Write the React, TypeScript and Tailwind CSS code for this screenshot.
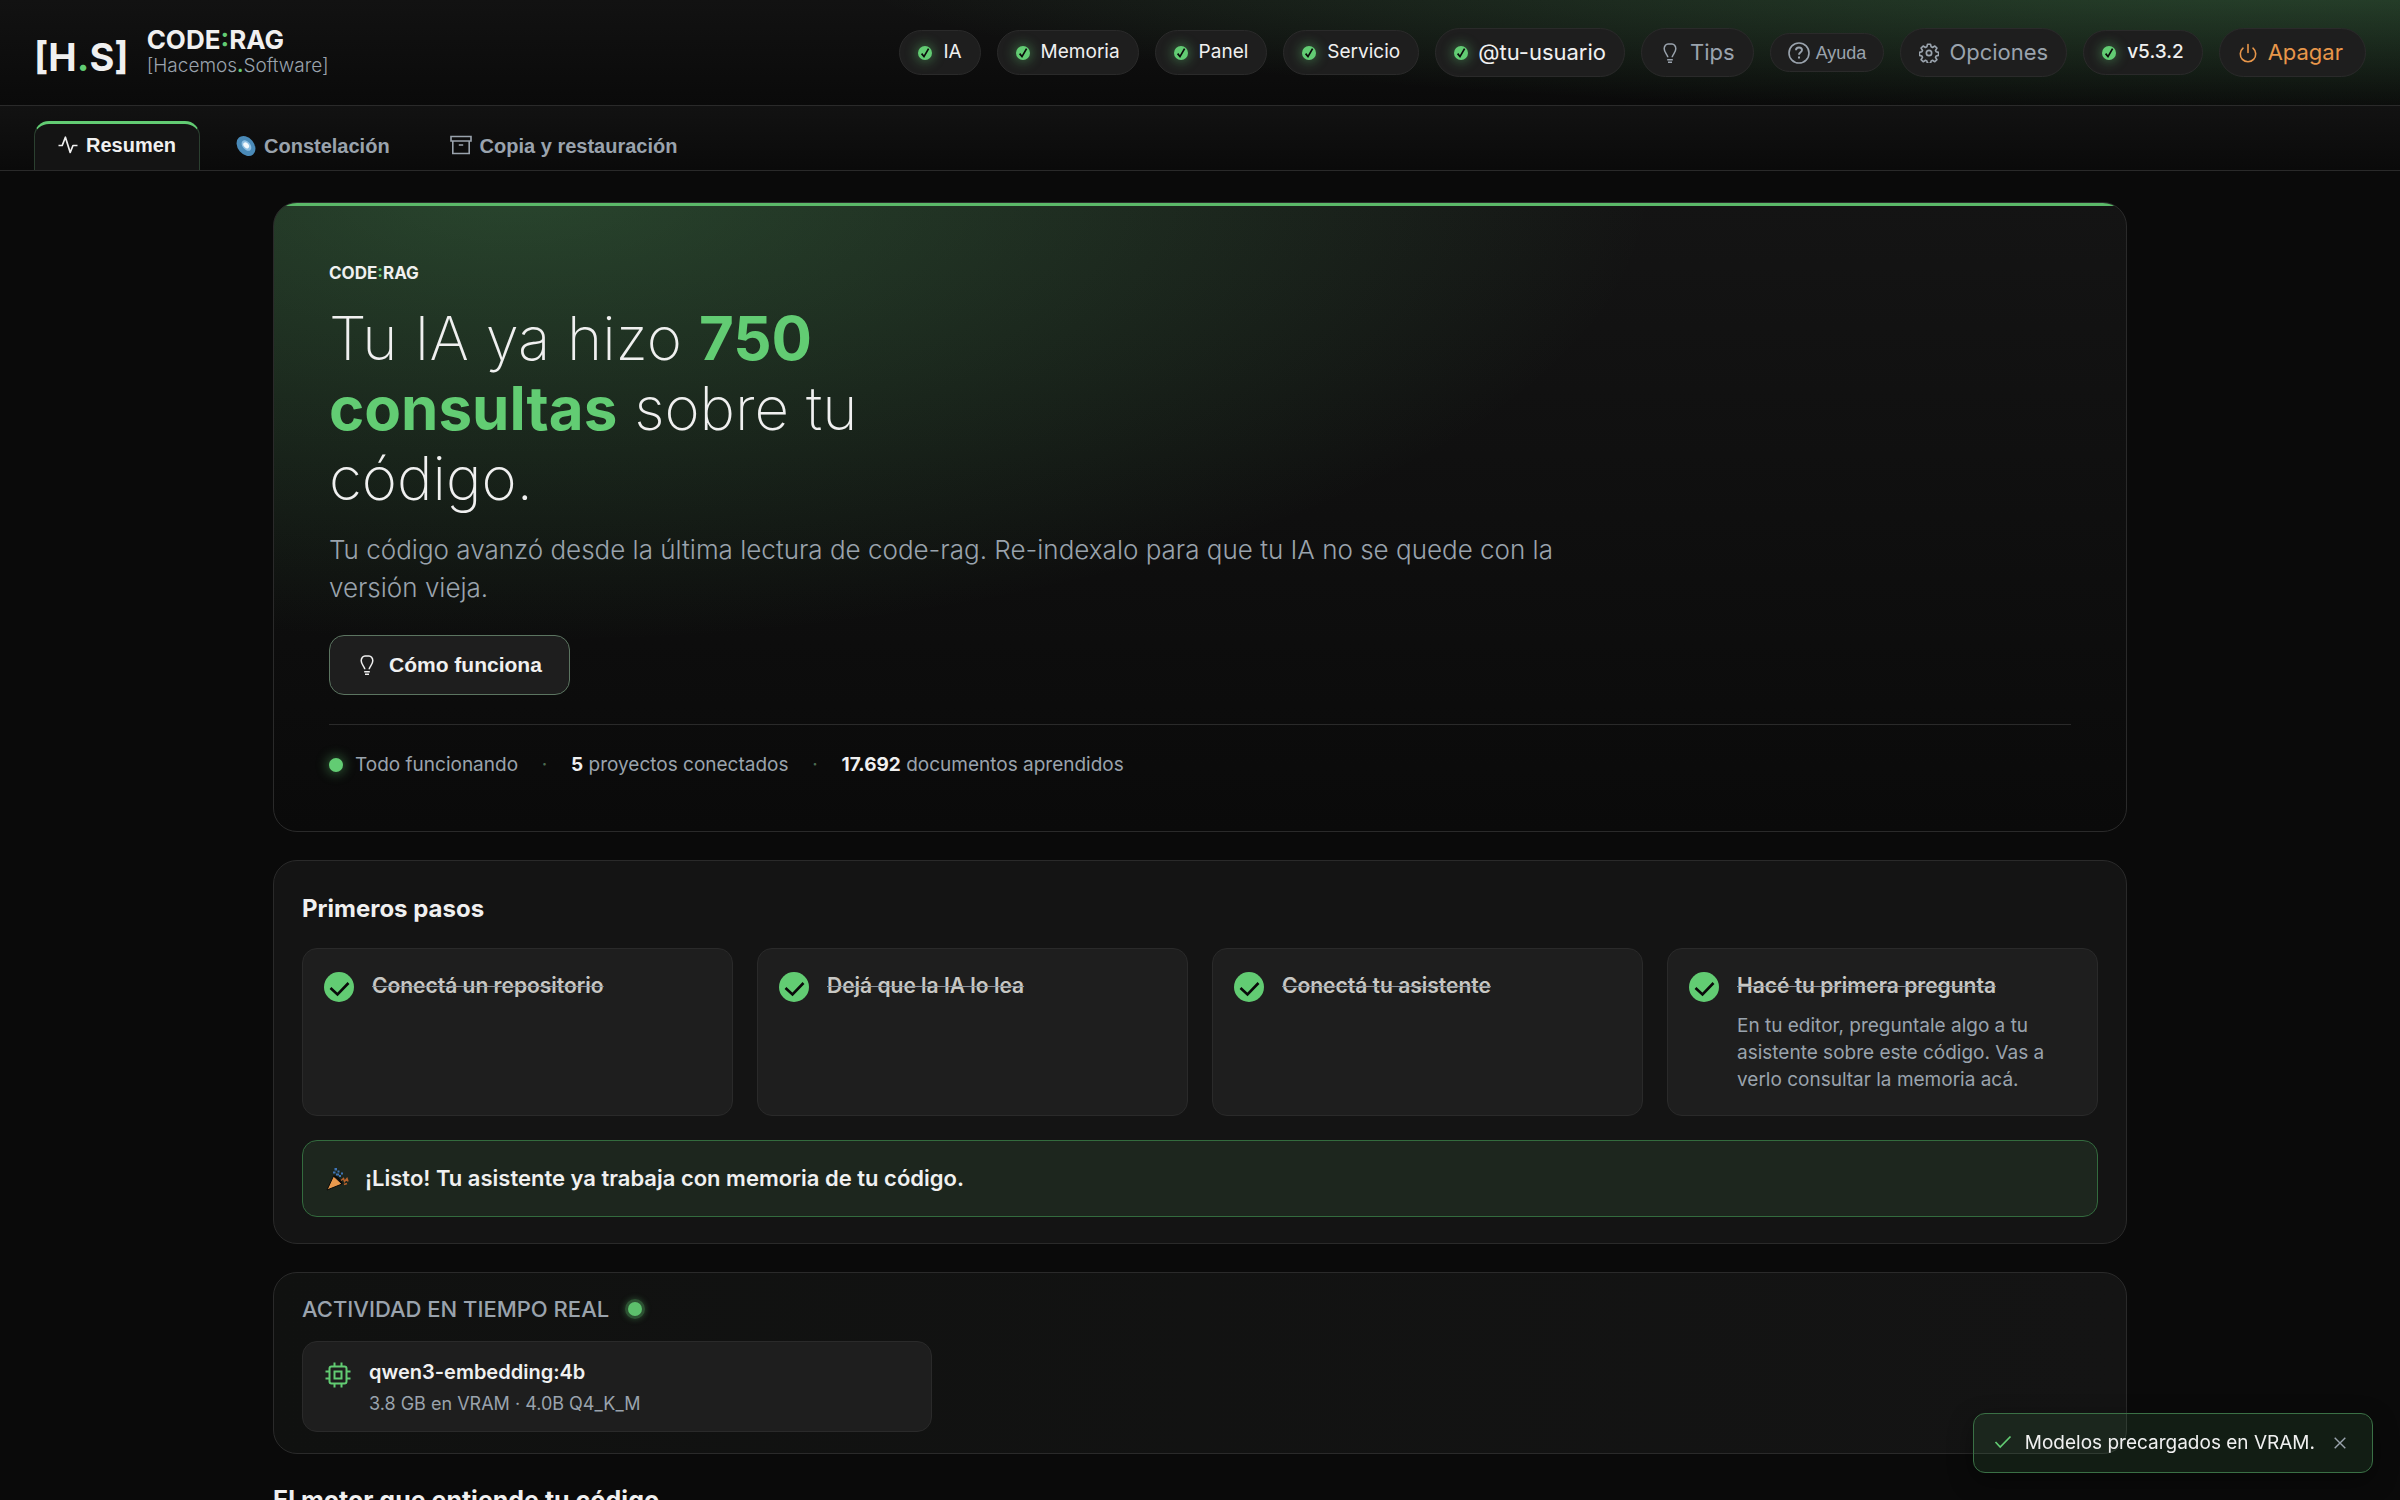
import type { ReactNode } from 'react'

type IconProps = { className?: string }

function Bulb({ className = 'size-5' }: IconProps) {
  return (
    <svg viewBox="0 0 20 20" className={className} fill="none" stroke="currentColor" strokeWidth="1.5" aria-hidden="true">
      <path d="M7.8 14.200C7.600 11.600 4.200 9.400 4.200 5.800C4.200 2.800 6.200 0.900 8 0.900H12C13.800 0.900 15.800 2.800 15.800 5.800C15.800 9.400 12.400 11.600 12.200 14.200" />
      <path d="M7.200 16.700H12.800M8 19.200H12" />
    </svg>
  )
}

function Question({ className = 'size-[22px]' }: IconProps) {
  return (
    <svg viewBox="0 0 22 22" className={className} fill="none" stroke="currentColor" strokeWidth="1.6" aria-hidden="true">
      <circle cx="11" cy="11" r="10" />
      <path d="M8 8.300C8 6.500 9.300 5.500 11 5.500C12.700 5.500 14 6.600 14 8.100C14 10.300 11 10.400 11 12.800" strokeWidth="1.900" />
      <path d="M11 14.600V16.600" strokeWidth="2" />
    </svg>
  )
}

function Gear({ className = 'size-5' }: IconProps) {
  return (
    <svg viewBox="0 0 24 24" className={className} fill="none" stroke="currentColor" strokeWidth="2" strokeLinejoin="round" aria-hidden="true">
      <circle cx="12" cy="12" r="3.200" />
      <path d="M10.200 1.500h3.600l.8 3.100 1.600.7 2.800-1.700 2.500 2.500-1.700 2.800.7 1.600 3 .8v3.500l-3 .8-.7 1.600 1.700 2.800-2.500 2.500-2.800-1.700-1.600.7-.8 3h-3.600l-.8-3-1.600-.7-2.800 1.700-2.500-2.500 1.700-2.800-.7-1.600-3-.8v-3.500l3-.8.7-1.600-1.700-2.800 2.500-2.500 2.800 1.700 1.600-.7z" />
    </svg>
  )
}

function Power({ className = 'size-5' }: IconProps) {
  return (
    <svg viewBox="0 0 20 20" className={className} fill="none" stroke="currentColor" strokeWidth="1.6" strokeLinecap="round" aria-hidden="true">
      <path d="M10 1.500V9.500M5 5.200A7.700 7.700 0 1 0 15 5.200" />
    </svg>
  )
}

function Pulse({ className = 'size-5' }: IconProps) {
  return (
    <svg viewBox="0 0 20 20" className={className} fill="none" stroke="currentColor" strokeWidth="1.700" strokeLinejoin="round" aria-hidden="true">
      <path d="M0.500 10.500H4.200L7.400 2.200L12.200 17.500L15 10.500H19.500" />
    </svg>
  )
}

function Archive({ className = 'size-[22px]' }: IconProps) {
  return (
    <svg viewBox="0 0 22 22" className={className} fill="none" stroke="currentColor" strokeWidth="1.6" aria-hidden="true">
      <path d="M1 1.500H21V6H1ZM2.800 6V18.500H19.200V6M8.800 10H13.200" />
    </svg>
  )
}

function Cpu({ className = 'size-[26px]' }: IconProps) {
  return (
    <svg viewBox="0 0 26 26" className={className} fill="none" stroke="currentColor" strokeWidth="2" aria-hidden="true">
      <rect x="4.500" y="4.500" width="17" height="17" rx="2" />
      <rect x="9.500" y="9.500" width="7" height="7" />
      <path d="M9.500 0.500V4.500M16.500 0.500V4.500M9.500 21.500V25.500M16.500 21.500V25.500M0.500 9.500H4.500M0.500 16.500H4.500M21.500 9.500H25.500M21.500 16.500H25.500" />
    </svg>
  )
}

function Galaxy() {
  return (
    <svg viewBox="0 0 20 20" className="size-5 overflow-visible" aria-hidden="true">
      <g transform="rotate(50 10 10)">
        <ellipse cx="10" cy="10" rx="11" ry="8.200" fill="#4a8ab8" />
        <ellipse cx="10" cy="9.400" rx="6" ry="3.900" fill="#8dbfe3" />
        <ellipse cx="9.600" cy="9.400" rx="3.400" ry="2.400" fill="#f2f8fc" />
      </g>
    </svg>
  )
}

function StatusDot() {
  return (
    <span className="flex size-3.5 shrink-0 items-center justify-center rounded-full bg-[#62cc73] shadow-[0_0_12px_2px_rgba(98,204,115,0.4)]">
      <svg viewBox="0 0 14 14" className="size-3.5" aria-hidden="true">
        <path d="M3.600 7.600 L6 10.600 L10.600 2.600" fill="none" stroke="#0a0a0a" strokeWidth="1.700" />
      </svg>
    </span>
  )
}

function StatusPill({ children }: { children: ReactNode }) {
  return (
    <button
      type="button"
      className="flex h-[45px] items-center gap-[11px] rounded-full border border-[#2a2a2a] bg-[#1e1e1e] px-[18px] text-[19px] text-[#f0f0f0]"
    >
      <StatusDot />
      {children}
    </button>
  )
}

function ActionPill({ icon, tone, children }: { icon: ReactNode; tone: string; children: ReactNode }) {
  return (
    <button
      type="button"
      className={`flex h-[49px] items-center gap-2.5 rounded-full border border-[#2a2a2a] bg-[#1e1e1e] px-[18px] text-[22px] ${tone}`}
    >
      {icon}
      {children}
    </button>
  )
}

function Wordmark() {
  return (
    <>
      CODE<span className="text-[#62cc73]">:</span>RAG
    </>
  )
}

function Header() {
  return (
    <header className="flex h-[106px] shrink-0 items-center justify-between border-b border-[#2a2a2a] bg-[radial-gradient(1450px_135px_at_96%_-20px,rgba(98,204,115,0.27),transparent),linear-gradient(#121212,#0a0a0a)] px-[34px]">
      <a href="#inicio" className="flex items-center gap-[18px]">
        <span className="pt-2 text-[38px] leading-10 font-bold text-[#f0f0f0]">
          [H<span className="text-[#62cc73]">.</span>S]
        </span>
        <span className="flex flex-col pb-0.5">
          <span className="text-[26px] leading-7 font-bold text-[#f0f0f0]">
            <Wordmark />
          </span>
          <span className="text-[19px] leading-6 font-light text-[#9aa3ad]">
            [Hacemos<span className="font-bold text-[#62cc73]">.</span>Software]
          </span>
        </span>
      </a>
      <div className="flex items-center gap-4">
        <StatusPill>IA</StatusPill>
        <StatusPill>Memoria</StatusPill>
        <StatusPill>Panel</StatusPill>
        <StatusPill>Servicio</StatusPill>
        <ActionPill icon={<StatusDot />} tone="text-[#f0f0f0]">
          @tu-usuario
        </ActionPill>
        <ActionPill icon={<Bulb />} tone="text-[#9aa3ad]">
          Tips
        </ActionPill>
        <button
          type="button"
          className="flex h-[39px] items-center gap-1.5 rounded-full border border-[#2a2a2a] bg-[#1e1e1e] px-[17px] font-['Liberation_Sans',sans-serif] text-lg text-[#9aa3ad]"
        >
          <Question />
          Ayuda
        </button>
        <ActionPill icon={<Gear />} tone="text-[#9aa3ad]">
          Opciones
        </ActionPill>
        <StatusPill>
          <span className="font-medium">v5.3.2</span>
        </StatusPill>
        <ActionPill icon={<Power />} tone="text-[#e8964a]">
          <span className="pr-1">Apagar</span>
        </ActionPill>
      </div>
    </header>
  )
}

function Tabs() {
  const idle = 'flex items-center gap-2 px-6 text-[#9aa3ad]'
  return (
    <nav className="flex h-[65px] shrink-0 items-stretch gap-3 border-b border-[#2a2a2a] bg-linear-to-b from-[#121212] to-[#0a0a0a] px-[34px] pt-[15px] font-['Liberation_Sans',sans-serif] text-[20px] font-bold">
      <button
        type="button"
        className="flex items-center gap-2 rounded-t-[15px] border-x border-t-[3px] border-x-[#2b4030] border-t-[#62cc73] bg-[#141414] px-[23px] pb-1 text-[#f0f0f0]"
      >
        <Pulse />
        Resumen
      </button>
      <button type="button" className={idle}>
        <Galaxy />
        Constelación
      </button>
      <button type="button" className={idle}>
        <Archive />
        Copia y restauración
      </button>
    </nav>
  )
}

function Hero() {
  return (
    <section className="relative overflow-hidden rounded-3xl border border-[#2a2a2a] bg-[radial-gradient(1140px_460px_at_13%_-20px,rgba(98,204,115,0.27),transparent),linear-gradient(#141414,#0a0a0a)] px-[55px] pt-14 pb-[52px]">
      <div className="absolute inset-x-0 top-0 h-[3px] bg-[#5bb969]" />
      <p className="text-[17px] leading-7 font-bold text-[#f0f0f0]">
        <Wordmark />
      </p>
      <h1 className="mt-4 max-w-[720px] text-[60px] leading-[70px] font-extralight text-[#f0f0f0]">
        Tu IA ya hizo <strong className="font-bold text-[#62cc73]">750 consultas</strong> sobre tu código.
      </h1>
      <p className="mt-[18px] max-w-[1270px] text-[26px] leading-[38px] font-light text-[#9aa3ad]">
        Tu código avanzó desde la última lectura de code-rag. Re-indexalo para que tu IA no se quede con la versión
        vieja.
      </p>
      <button
        type="button"
        className="mt-7 flex h-[60px] items-center gap-3 rounded-[15px] border border-[#5c7561] bg-[#1e1e1e] px-[27px] font-['Liberation_Sans',sans-serif] text-[21px] font-bold text-[#f0f0f0]"
      >
        <Bulb />
        Cómo funciona
      </button>
      <div className="mt-[29px] flex items-center border-t border-[#2a2a2a] pt-[26px] text-[19px] leading-7 text-[#9aa3ad]">
        <span className="flex items-center gap-3">
          <span className="size-3.5 rounded-full bg-[#62cc73] shadow-[0_0_12px_2px_rgba(98,204,115,0.4)]" />
          Todo funcionando
        </span>
        <span className="w-[53px] text-center text-[#4b6a51]">·</span>
        <span>
          <strong className="font-bold text-[#f0f0f0]">5</strong> proyectos conectados
        </span>
        <span className="w-[53px] text-center text-[#4b6a51]">·</span>
        <span>
          <strong className="font-bold text-[#f0f0f0]">17.692</strong> documentos aprendidos
        </span>
      </div>
    </section>
  )
}

const steps = [
  { title: 'Conectá un repositorio' },
  { title: 'Dejá que la IA lo lea' },
  { title: 'Conectá tu asistente' },
  {
    title: 'Hacé tu primera pregunta',
    text: 'En tu editor, preguntale algo a tu asistente sobre este código. Vas a verlo consultar la memoria acá.',
  },
]

function PartyPopper() {
  return (
    <svg viewBox="0 0 24 24" className="size-6" aria-hidden="true">
      <path d="M1 23 7.500 9 16 17Z" fill="#e8994d" stroke="#0a0a0a" strokeWidth="1" />
      <path d="M7.500 9Q13.500 10.500 16 17" fill="none" stroke="#0a0a0a" strokeWidth="1.400" />
      <g fill="#3f74b5">
        <rect x="8.500" y="1" width="2.500" height="2.500" />
        <rect x="11.500" y="3.500" width="2" height="2" />
        <rect x="7" y="4.500" width="2.500" height="2" />
        <rect x="10" y="6.500" width="3" height="2" />
        <rect x="13" y="8" width="2" height="2" />
        <rect x="15" y="5.500" width="2" height="2" />
      </g>
      <g fill="none" stroke="#b8632c" strokeWidth="1.500">
        <path d="M15 13.500 17.500 11.500 18.500 14.500 21 11.500 22 14.500" />
        <path d="M18 17.500 21 16.500" />
      </g>
    </svg>
  )
}

function StepCheck() {
  return (
    <span className="size-[30px] shrink-0 rounded-full bg-[#62cc73]">
      <svg viewBox="0 0 30 30" className="size-[30px]" aria-hidden="true">
        <path d="M6.500 16L13.500 22.500L24.500 11" fill="none" stroke="#0a0a0a" strokeWidth="2.600" />
      </svg>
    </span>
  )
}

function FirstSteps() {
  return (
    <section className="rounded-3xl border border-[#2a2a2a] bg-[#141414] p-7 pb-[26px]">
      <h2 className="text-2xl leading-10 font-bold text-[#f0f0f0]">Primeros pasos</h2>
      <ol className="mt-[19px] grid grid-cols-4 gap-6">
        {steps.map((step) => (
          <li
            key={step.title}
            className="flex items-start gap-[18px] rounded-[15px] border border-[#2a2a2a] bg-[#1e1e1e] px-[21px] pt-[23px] pb-[22px]"
          >
            <StepCheck />
            <div>
              <h3 className="text-[21px] leading-7 font-semibold text-[#c8c8c4] line-through decoration-[#8b939b] decoration-1">
                {step.title}
              </h3>
              {step.text && <p className="mt-3 text-[19px] leading-[27px] text-[#9aa3ad]">{step.text}</p>}
            </div>
          </li>
        ))}
      </ol>
      <p className="mt-6 flex h-[77px] items-center gap-[15px] rounded-[15px] border border-[#336b3e] bg-[#1d261e] px-[23px] text-[22px] font-semibold text-[#f0f0f0]">
        <PartyPopper />
        ¡Listo! Tu asistente ya trabaja con memoria de tu código.
      </p>
    </section>
  )
}

function Activity() {
  return (
    <section className="rounded-3xl border border-[#2a2a2a] bg-linear-to-r from-[#101110] to-[#141414] px-7 pt-5 pb-[21px]">
      <h2 className="flex items-center gap-4 text-[22px] leading-8 font-medium text-[#9aa3ad]">
        ACTIVIDAD EN TIEMPO REAL
        <span className="flex size-5 items-center justify-center rounded-full bg-[#62cc73]/35 shadow-[0_0_6px_rgba(98,204,115,0.35)]">
          <span className="size-3.5 rounded-full bg-[#5cc06c]" />
        </span>
      </h2>
      <div className="mt-4 flex max-w-[630px] items-start gap-[18px] rounded-[15px] border border-[#2a2a2a] bg-[#1e1e1e] px-[22px] pt-4 pb-[13px]">
        <Cpu className="mt-1 size-[26px] shrink-0 text-[#62cc73]" />
        <div>
          <h3 className="text-[20px] leading-7 font-semibold text-[#f0f0f0]">qwen3-embedding:4b</h3>
          <p className="mt-1 text-[18px] leading-7 text-[#9aa3ad]">3.8 GB en VRAM · 4.0B Q4_K_M</p>
        </div>
      </div>
    </section>
  )
}

function Toast() {
  return (
    <div
      role="status"
      className="fixed right-[27px] bottom-[27px] flex h-[60px] items-center gap-[13px] rounded-xl border border-[#3a7045] bg-[#62cc73]/10 px-5 text-[19px] text-[#f0f0f0] shadow-[0_8px_24px_rgba(0,0,0,0.4)]"
    >
      <svg viewBox="0 0 18 18" className="size-[18px]" fill="none" stroke="#62cc73" strokeWidth="1.700" aria-hidden="true">
        <path d="M1.500 8L6.200 13L16.500 2.500" />
      </svg>
      Modelos precargados en VRAM.
      <button type="button" aria-label="Cerrar" className="px-1.5 text-[#9aa3ad]">
        <svg viewBox="0 0 12 12" className="size-3" fill="none" stroke="currentColor" strokeWidth="1.400" aria-hidden="true">
          <path d="M0.700 0.700L11.300 11.300M11.300 0.700L0.700 11.300" />
        </svg>
      </button>
    </div>
  )
}

export default function App() {
  return (
    <div className="flex h-screen flex-col overflow-hidden bg-[#0a0a0a] font-['Inter',sans-serif]">
      <Header />
      <Tabs />
      <main className="mx-auto flex w-full max-w-[1854px] flex-col gap-7 pt-[31px]">
        <Hero />
        <FirstSteps />
        <Activity />
        <h2 className="text-[25px] leading-9 font-bold text-[#f0f0f0]">El motor que entiende tu código</h2>
      </main>
      <Toast />
    </div>
  )
}
